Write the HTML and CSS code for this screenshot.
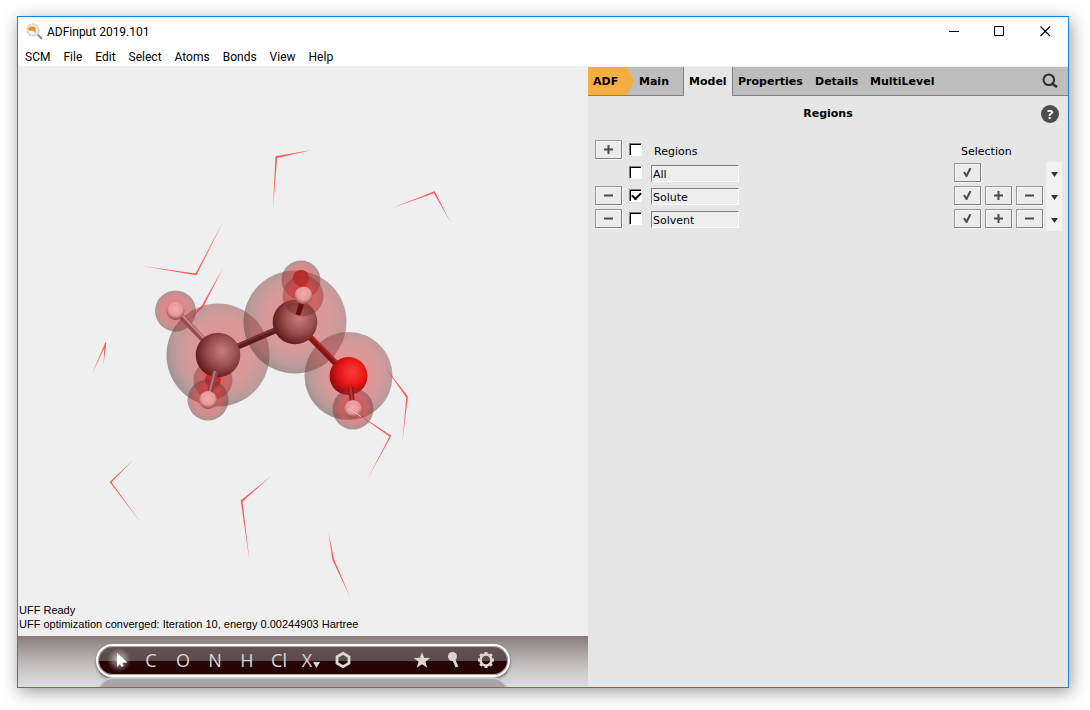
FILE: index.html
```html
<!DOCTYPE html>
<html lang="en">
<head>
<meta charset="utf-8">
<title>ADFinput 2019.101</title>
<link rel="stylesheet" href="styles.css">
</head>
<body>
<div class="window">
  <header class="titlebar">
    <svg class="app-icon" width="18" height="18" viewBox="0 0 18 18" aria-hidden="true">
      <path d="M11.500 11.500l4.300 4.300" stroke="#8c8c8c" stroke-width="2"/>
      <circle cx="7" cy="7" r="5.800" fill="#f6f2ee" stroke="#d2d2d2" stroke-width="1.900" stroke-dasharray="3 .6"/>
      <path d="M2 5.500l3-2 4.500.5v6l-2.500-2.500-4 .3z" fill="#f58a1c"/>
    </svg>
    <h1 class="title">ADFinput 2019.101</h1>
    <div class="controls">
      <button class="control" aria-label="Minimize"><svg width="11" height="11" viewBox="0 0 11 11"><path d="M1 5.500h10" stroke="#000"/></svg></button>
      <button class="control" aria-label="Maximize"><svg width="11" height="11" viewBox="0 0 11 11"><path d="M.5.5h9v9h-9z" fill="none" stroke="#000"/></svg></button>
      <button class="control" aria-label="Close"><svg width="11" height="11" viewBox="0 0 11 11"><path d="M.5.5l9.500 9.500M10 .5L.5 10" stroke="#000" stroke-width="1.100"/></svg></button>
    </div>
  </header>
  <nav class="menubar">
    <button>SCM</button><button>File</button><button>Edit</button><button>Select</button><button>Atoms</button><button>Bonds</button><button>View</button><button>Help</button>
  </nav>
  <main class="workspace">
    <section class="viewer">
      <div class="scene">
        <svg class="molecule" viewBox="18 66 570 570" preserveAspectRatio="xMidYMin meet" role="img" aria-label="Ethanol molecule surrounded by water">
          <defs>
            <radialGradient id="halo" cx=".54" cy=".46" r=".56">
              <stop offset="0" stop-color="#d83434" stop-opacity=".5"/>
              <stop offset=".55" stop-color="#c03838" stop-opacity=".47"/>
              <stop offset=".85" stop-color="#803c3c" stop-opacity=".47"/>
              <stop offset="1" stop-color="#4c3434" stop-opacity=".5"/>
            </radialGradient>
            <radialGradient id="halo-small" cx=".5" cy=".48" r=".54">
              <stop offset="0" stop-color="#e02020" stop-opacity=".58"/>
              <stop offset=".6" stop-color="#c42c2c" stop-opacity=".5"/>
              <stop offset="1" stop-color="#5c3030" stop-opacity=".48"/>
            </radialGradient>
            <radialGradient id="carbon" cx=".6" cy=".42" r=".66">
              <stop offset="0" stop-color="#c87c7c"/><stop offset=".5" stop-color="#9a4e4e"/><stop offset="1" stop-color="#521414"/>
            </radialGradient>
            <radialGradient id="oxygen" cx=".6" cy=".4" r=".68">
              <stop offset="0" stop-color="#fa3c3c"/><stop offset=".5" stop-color="#ea1616"/><stop offset="1" stop-color="#800808"/>
            </radialGradient>
            <radialGradient id="hydrogen" cx=".5" cy=".38" r=".68">
              <stop offset="0" stop-color="#f4a8a8"/><stop offset=".55" stop-color="#e89a9a"/><stop offset="1" stop-color="#743434"/>
            </radialGradient>
            <radialGradient id="hidden" cx=".55" cy=".4" r=".6">
              <stop offset="0" stop-color="#f82828"/><stop offset="1" stop-color="#b81010"/>
            </radialGradient>
          </defs>
          <g fill="#fa2828" opacity=".75">
            <path d="M312 150L275.500 156.200 273 209 277.100 158z"/>
            <path d="M391 208.500L434.600 191.300 451 223 433.900 193.300z"/>
            <path d="M142 266L196.400 275.300 223 222 195.600 273.500z"/>
            <path d="M92 374L105.500 342 106.200 343 103.500 365 104.300 348z"/>
            <path d="M385 367L407.900 396.500 402.500 441 406.300 397.500z"/>
            <path d="M133 460L109.700 482 141 523 111.500 482.200z"/>
            <path d="M271 476L240.700 500.500 249.500 561 242.500 501.600z"/>
            <path d="M328.500 532L332.300 559.500 350.500 598 333.900 558.800z"/>
          </g>
          <path d="M218 372l-5 10M302 282l2 14" stroke="#b81212" stroke-width="6"/>
          <circle cx="213" cy="380" r="8" fill="url(#hidden)"/>
          <circle cx="301" cy="278" r="8" fill="url(#hidden)"/>
          <g fill="url(#halo-small)">
            <circle cx="213" cy="380" r="19.500"/>
            <circle cx="301" cy="280" r="19.500"/>
            <circle cx="175.500" cy="311" r="20.500"/>
            <circle cx="303" cy="296" r="20.500"/>
          </g>
          <g fill="url(#halo)">
            <circle cx="218" cy="355" r="51.500"/>
            <circle cx="295" cy="322" r="51.500"/>
            <circle cx="348.500" cy="376" r="44"/>
          </g>
          <path fill="#fa2828" opacity=".7" d="M223 268L203.300 307 187 322 201.800 305.500z"/>
          <path d="M218 355L295 322" stroke="#5a1c1f" stroke-width="6"/>
          <path d="M218 353L295 320" stroke="#793235" stroke-width="2"/>
          <path d="M295 322L348 376" stroke="#861317" stroke-width="6"/>
          <path d="M297 321L350 375" stroke="#b62226" stroke-width="2"/>
          <path d="M176 311L218 355" stroke="#934b4b" stroke-width="6"/>
          <path d="M178 311L220 355" stroke="#cd8585" stroke-width="2"/>
          <circle cx="218" cy="355" r="22.300" fill="url(#carbon)"/>
          <circle cx="295" cy="322" r="22.300" fill="url(#carbon)"/>
          <circle cx="348.500" cy="376" r="19" fill="url(#oxygen)"/>
          <circle cx="175.500" cy="311" r="9" fill="url(#hydrogen)"/>
          <path d="M303 296L297.800 315.500A20.500 20.500 0 0 1 285 306a22.300 22.300 0 0 1 30 6 20.500 20.500 0 0 1-17.200 3.500z" fill="#4a0c10" opacity=".25"/>
          <path d="M303.500 297l-5.500 18" stroke="#6e0a0c" stroke-width="5"/>
          <circle cx="303.500" cy="295.500" r="9" fill="url(#hydrogen)"/>
          <circle cx="208" cy="400" r="20.500" fill="url(#halo-small)"/>
          <path d="M215.500 371L208 400" stroke="#8c4343" stroke-width="6"/>
          <path d="M215 371L207.500 400" stroke="#bd7777" stroke-width="2"/>
          <circle cx="208" cy="400" r="9" fill="url(#hydrogen)"/>
          <circle cx="353" cy="409" r="20.500" fill="url(#halo-small)"/>
          <path d="M350.500 387L353 409" stroke="#8d1a1d" stroke-width="5"/>
          <path d="M350.500 387L353 409" stroke="#b93538" stroke-width="2"/>
          <circle cx="353" cy="409" r="9" fill="url(#hydrogen)"/>
          <path fill="#fa2828" opacity=".75" d="M346 406L391.300 435.700 367 480 389.500 436.500z"/>
          <path d="M348 408l13 8.500" stroke="#f0c8c8"/>
        </svg>
        <p class="status">UFF Ready<br>UFF optimization converged: Iteration 10, energy 0.00244903 Hartree</p>
      </div>
      <div class="dock">
        <div class="pill" role="toolbar" aria-label="Atom tools">
          <div class="tools">
            <button class="tool tool-active" aria-label="Select"><svg width="24" height="24" viewBox="0 0 24 24"><path d="M10 5l10.500 9.500-5.300.2 1.600 3-2.300 1.200-1.600-3L10 19z" fill="#fff"/></svg></button>
            <button class="tool">C</button><button class="tool">O</button><button class="tool">N</button><button class="tool">H</button><button class="tool">Cl</button>
            <button class="tool">X<svg class="drop" width="7" height="6" viewBox="0 0 7 6"><path d="M0 0h7l-3.500 6z"/></svg></button>
            <button class="tool" aria-label="Ring"><svg width="18" height="18" viewBox="0 0 18 18"><path d="M9 2.300l6 3.400v6.600l-6 3.400-6-3.400V5.700z" fill="none" stroke="#dcd6d6" stroke-width="2.800"/></svg></button>
          </div>
          <div class="tools">
            <button class="tool" aria-label="Favorites"><svg width="18" height="18" viewBox="0 0 18 18"><path d="M9 1l2.100 5.800 6.200.2-4.900 3.800 1.800 6L9 13.300l-5.200 3.500 1.800-6L.7 7l6.200-.2z"/></svg></button>
            <button class="tool" aria-label="Search"><svg width="18" height="18" viewBox="0 0 18 18"><circle cx="7.500" cy="5.500" r="4.500"/><path d="M8.500 8l3.500 8" stroke="#dcd6d6" stroke-width="3"/></svg></button>
            <button class="tool" aria-label="Settings"><svg width="18" height="18" viewBox="0 0 18 18"><circle cx="9" cy="9" r="5.500" fill="none" stroke="#dcd6d6" stroke-width="2.600"/><path d="M9 1v2.500M9 14.500V17M1 9h2.500M14.500 9H17M3.300 3.300l1.900 1.900M12.800 12.800l1.900 1.900M3.300 14.700l1.900-1.900M12.800 5.200l1.900-1.900" stroke="#dcd6d6" stroke-width="3"/></svg></button>
          </div>
        </div>
        <div class="reflection"></div>
      </div>
    </section>
    <section class="panel">
      <nav class="tabs">
        <button class="tab tab-adf">ADF</button><button class="tab tab-main">Main</button><button class="tab tab-current">Model</button><button class="tab tab-properties">Properties</button><button class="tab tab-details">Details</button><button class="tab">MultiLevel</button>
        <button class="search" aria-label="Search"><svg width="16" height="16" viewBox="0 0 16 16"><circle cx="6.800" cy="6.800" r="5.300" fill="none" stroke="#2c2c2c" stroke-width="2"/><path d="M10.500 11l4.500 3" stroke="#2c2c2c" stroke-width="2.600"/></svg></button>
      </nav>
      <div class="panel-head">
        <h2 class="panel-title">Regions</h2>
        <button class="help" aria-label="Help">?</button>
      </div>
      <div class="regions">
        <div class="row">
          <button class="btn" aria-label="Add region"><svg viewBox="0 0 9 9"><path d="M0 4.500h9M4.500 0v9"/></svg></button>
          <input type="checkbox" id="all-regions"><label class="caption" for="all-regions">Regions</label>
          <span class="caption selection">Selection</span>
        </div>
        <div class="row">
          <span class="blank"></span>
          <input type="checkbox" aria-label="Show All"><input class="name" type="text" value="All" aria-label="Region name">
          <div class="actions">
            <button class="btn" aria-label="Select All"><svg viewBox="0 0 9 9"><path d="M1 4l2.500 4L7.500 0"/></svg></button>
            <span class="blank"></span><span class="blank"></span>
          </div>
          <button class="more" aria-label="More for All"><svg width="7" height="5" viewBox="0 0 7 5"><path d="M0 0h7L3.500 5z"/></svg></button>
        </div>
        <div class="row">
          <button class="btn" aria-label="Remove Solute"><svg viewBox="0 0 9 9"><path d="M0 4.500h9"/></svg></button>
          <input type="checkbox" checked aria-label="Show Solute"><input class="name" type="text" value="Solute" aria-label="Region name">
          <div class="actions">
            <button class="btn" aria-label="Select Solute"><svg viewBox="0 0 9 9"><path d="M1 4l2.500 4L7.500 0"/></svg></button>
            <button class="btn" aria-label="Add selection"><svg viewBox="0 0 9 9"><path d="M0 4.500h9M4.500 0v9"/></svg></button>
            <button class="btn" aria-label="Remove selection"><svg viewBox="0 0 9 9"><path d="M0 4.500h9"/></svg></button>
          </div>
          <button class="more" aria-label="More for Solute"><svg width="7" height="5" viewBox="0 0 7 5"><path d="M0 0h7L3.500 5z"/></svg></button>
        </div>
        <div class="row">
          <button class="btn" aria-label="Remove Solvent"><svg viewBox="0 0 9 9"><path d="M0 4.500h9"/></svg></button>
          <input type="checkbox" aria-label="Show Solvent"><input class="name" type="text" value="Solvent" aria-label="Region name">
          <div class="actions">
            <button class="btn" aria-label="Select Solvent"><svg viewBox="0 0 9 9"><path d="M1 4l2.500 4L7.500 0"/></svg></button>
            <button class="btn" aria-label="Add selection"><svg viewBox="0 0 9 9"><path d="M0 4.500h9M4.500 0v9"/></svg></button>
            <button class="btn" aria-label="Remove selection"><svg viewBox="0 0 9 9"><path d="M0 4.500h9"/></svg></button>
          </div>
          <button class="more" aria-label="More for Solvent"><svg width="7" height="5" viewBox="0 0 7 5"><path d="M0 0h7L3.500 5z"/></svg></button>
        </div>
      </div>
    </section>
  </main>
</div>
</body>
</html>
```
FILE: styles.css
```css
* { box-sizing: border-box; }
body {
  margin: 0;
  min-height: 100vh;
  padding: 16px 21px 22px 17px;
  display: flex;
  background: #fff;
  color: #000;
  font-family: "DejaVu Sans", Verdana, sans-serif;
  font-size: 11px;
}
button {
  margin: 0;
  padding: 0;
  border: 0;
  background: none;
  color: inherit;
  font: inherit;
}
svg { display: block; }

.window {
  flex: 1;
  display: flex;
  flex-direction: column;
  border: 1px solid #1883d7;
  background: #fff;
  box-shadow: 2px 4px 16px rgba(0, 0, 0, .4);
}
.titlebar {
  display: flex;
  align-items: center;
  height: 29px;
  padding-left: 8px;
}
.title {
  flex: 1;
  margin: 0 0 0 3px;
  font: 12px Roboto, "Segoe UI", sans-serif;
}
.controls { display: flex; align-self: stretch; }
.control { width: 46px; display: grid; place-items: center; }
.menubar {
  display: flex;
  gap: 13px;
  height: 20px;
  padding: 2px 0 0 7px;
  font: 12px Roboto, "Segoe UI", sans-serif;
}
.workspace { flex: 1; display: flex; }

.viewer {
  flex: 57 1 0;
  min-width: 0;
  display: flex;
  flex-direction: column;
  background: #efefef;
}
.scene {
  flex: 1;
  position: relative;
}
.molecule { width: 100%; }
.status {
  position: absolute;
  left: 1px;
  bottom: 5px;
  margin: 0;
  font: 11px/14px "Liberation Sans", Arial, sans-serif;
}
.dock {
  display: flex;
  flex-direction: column;
  align-items: center;
  height: 51px;
  padding-top: 8px;
  overflow: hidden;
  background: linear-gradient(#887a7a, #a8a1a1 30%, #c8c6c6 65%, #dedddd);
}
.pill {
  flex: none;
  display: flex;
  gap: 47px;
  height: 33px;
  padding: 0 6px 1px 5px;
  border: 2px solid #fff;
  border-radius: 17px;
  background: linear-gradient(#625251, #5c4b4b 50%, #240404 50%, #280505);
  box-shadow: 0 2px 3px rgba(0, 0, 0, .5), inset 0 0 0 1px #b5a5a5;
}
.tools { display: flex; }
.tool {
  width: 32px;
  display: flex;
  align-items: center;
  justify-content: center;
  color: #dcd6d6;
  fill: #dcd6d6;
  font: 18px "Open Sans", "Segoe UI", sans-serif;
}
.tool-active {
  background: radial-gradient(circle, rgba(255, 255, 255, .65), rgba(255, 255, 255, 0) 12px);
}
.drop { margin: 10px 0 0 1px; }
.reflection {
  flex: none;
  width: 412px;
  height: 33px;
  border: 2px solid #cfcbcb;
  border-radius: 17px;
  background: #aaa4a4;
}

.panel {
  flex: 48 1 0;
  min-width: 0;
  background: #e6e6e6;
}
.tabs {
  display: flex;
  height: 30px;
  border-top: 1px solid #f0f0f0;
  background: linear-gradient(#bdbdbd 28px, #808080 28px);
  font-weight: bold;
}
.tab { padding: 0 5px 1px; text-align: left; }
.tab-adf {
  width: 46px;
  margin-bottom: 1px;
  padding-bottom: 0;
  background: #f6ad42;
  clip-path: polygon(0 0, 39px 0, 46px 50%, 39px 100%, 0 100%);
}
.tab-main { width: 49px; }
.tab-current {
  width: 50px;
  border: solid #808080;
  border-width: 0 1px;
  background: #e6e6e6;
}
.tab-properties { width: 77px; }
.tab-details { width: 55px; }
.search { margin-left: auto; padding: 0 10px 1px; }
.panel-head {
  display: grid;
  grid-template-columns: 1fr auto 1fr;
  align-items: start;
  padding: 9px 9px 16px;
}
.panel-title {
  grid-column: 2;
  margin: 0;
  font-size: 11px;
  line-height: 18px;
}
.help {
  justify-self: end;
  width: 18px;
  height: 18px;
  border-radius: 50%;
  background: #4c4c4c;
  color: #fff;
  font: bold 13px "Open Sans", sans-serif;
}
.row {
  display: flex;
  align-items: center;
  height: 23px;
  padding: 1px 6px 3px 7px;
}
.btn {
  display: grid;
  place-items: center;
  width: 27px;
  height: 19px;
  border: 1px solid #808080;
  border-top-color: #999;
  border-left-color: #999;
  background: #ececec;
  box-shadow: 1px 1px #f8f8f8, inset 1px 1px #f8f8f8;
}
.btn svg {
  width: 9px;
  height: 9px;
  fill: none;
  stroke: #4a4a4a;
  stroke-width: 2;
}
.blank { width: 27px; }
input[type="checkbox"] {
  appearance: none;
  width: 13px;
  height: 13px;
  margin: 0 9px 0 7px;
  border: 1px solid #fff;
  border-top-color: #808080;
  border-left-color: #808080;
  background: #fff;
  box-shadow: inset 1px 1px #000;
}
input[type="checkbox"]:checked::before {
  content: "";
  display: block;
  width: 7px;
  height: 4px;
  margin: 2px 0 0 2px;
  border: solid #000;
  border-width: 0 0 2px 2px;
  transform: rotate(-45deg);
}
.caption { padding: 3px 0 0 3px; }
.selection { width: 104px; margin-left: auto; }
.name {
  align-self: flex-end;
  width: 88px;
  height: 17px;
  margin: 0;
  padding: 1px 1px 0;
  border: 1px solid #fff;
  border-top-color: #808080;
  border-left-color: #808080;
  background: #eee;
  font: inherit;
}
.actions { display: flex; gap: 4px; margin: 0 3px 0 auto; }
.more {
  width: 16px;
  height: 23px;
  margin: -1px 0 -3px;
  padding-top: 2px;
  display: grid;
  place-items: center;
  background: #f2f2f2;
  fill: #333;
}
```
